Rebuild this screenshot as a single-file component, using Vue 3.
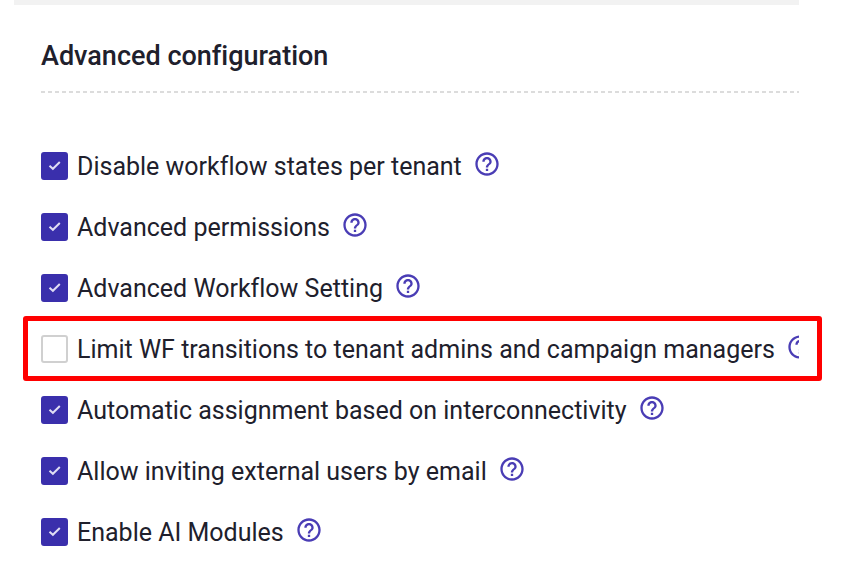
<script setup>
import { ref } from 'vue'

const options = ref([
  { id: 'disable-states', label: 'Disable workflow states per tenant', checked: true },
  { id: 'permissions', label: 'Advanced permissions', checked: true },
  { id: 'workflow-setting', label: 'Advanced Workflow Setting', checked: true },
  { id: 'limit-transitions', label: 'Limit WF transitions to tenant admins and campaign managers', checked: false, highlighted: true },
  { id: 'assignment', label: 'Automatic assignment based on interconnectivity', checked: true },
  { id: 'external-users', label: 'Allow inviting external users by email', checked: true },
  { id: 'ai-modules', label: 'Enable AI Modules', checked: true }
])
</script>

<template>
  <main class="panel">
    <h1 class="title">Advanced configuration</h1>
    <svg class="divider" aria-hidden="true">
      <line x1="0" y1="1" x2="100%" y2="1" />
    </svg>
    <ul class="options">
      <li v-for="option in options" :key="option.id" class="option" :class="{ highlighted: option.highlighted }">
        <div class="row">
          <span class="box">
            <input :id="option.id" v-model="option.checked" type="checkbox" class="check" />
            <svg v-if="option.checked" class="tick" viewBox="0 0 14 14" aria-hidden="true">
              <path d="M1.500 6.700 4.900 9.800 11.800 3" />
            </svg>
          </span>
          <label :for="option.id" class="label">{{ option.label }}</label>
          <button type="button" class="help" :aria-label="'Help: ' + option.label">
            <svg viewBox="0 0 24 24" aria-hidden="true">
              <path d="M11 18h2v-2h-2v2zm1-16C6.48 2 2 6.48 2 12s4.480 10 10 10 10-4.480 10-10S17.520 2 12 2zm0 18c-4.410 0-8-3.590-8-8s3.590-8 8-8 8 3.590 8 8-3.590 8-8 8zm0-14c-2.210 0-4 1.790-4 4h2c0-1.100.9-2 2-2s2 .9 2 2c0 2-3 1.750-3 5h2c0-2.250 3-2.500 3-5 0-2.210-1.790-4-4-4z" />
            </svg>
          </button>
        </div>
      </li>
    </ul>
  </main>
</template>

<style>
body {
  margin: 0;
  background: #fff;
}
</style>

<style scoped>
.panel {
  margin: 0 65px 0 14px;
  padding-left: 27px;
  border-top: 5px solid #f2f2f2;
  font-family: Roboto, "Liberation Sans", sans-serif;
  font-variant-ligatures: none;
  color: #20202c;
}

.title {
  margin: 0;
  padding: 35px 0 19px;
  font-size: 27px;
  font-weight: 500;
  line-height: 32px;
}

.divider {
  display: block;
  width: 100%;
  height: 2px;
}

.divider line {
  stroke: #dcdcdc;
  stroke-width: 2;
  stroke-dasharray: 4 3;
}

.options {
  margin: 0;
  padding: 42px 0 0;
  list-style: none;
}

.option {
  position: relative;
}

.highlighted::after {
  content: "";
  position: absolute;
  inset: -2px -23px -2px -18px;
  border: 5px solid #f00;
  border-radius: 3px;
  pointer-events: none;
}

.row {
  display: flex;
  align-items: center;
  height: 61px;
  overflow: hidden;
}

.box {
  display: grid;
  flex: none;
  width: 27px;
  height: 28px;
  margin-right: 9px;
}

.check,
.tick {
  grid-area: 1 / 1;
}

.check {
  appearance: none;
  box-sizing: border-box;
  width: 100%;
  height: 100%;
  margin: 0;
  border: 2px solid #d0d0d0;
  border-radius: 3px;
  background: #fff;
}

.check:checked {
  border-color: #3a2fac;
  background: #3a2fac;
}

.tick {
  place-self: center;
  width: 14px;
  height: 14px;
  fill: none;
  stroke: #e0ddf4;
  stroke-width: 2;
  pointer-events: none;
}

.label {
  flex: none;
  padding-top: 2px;
  font-size: 25px;
  line-height: 32px;
  white-space: nowrap;
}

.help {
  flex: none;
  width: 28px;
  height: 28px;
  margin: 0 0 4px 11px;
  padding: 0;
  border: 0;
  background: none;
}

.help svg {
  display: block;
  width: 28px;
  height: 28px;
  fill: #4a3db5;
}
</style>
